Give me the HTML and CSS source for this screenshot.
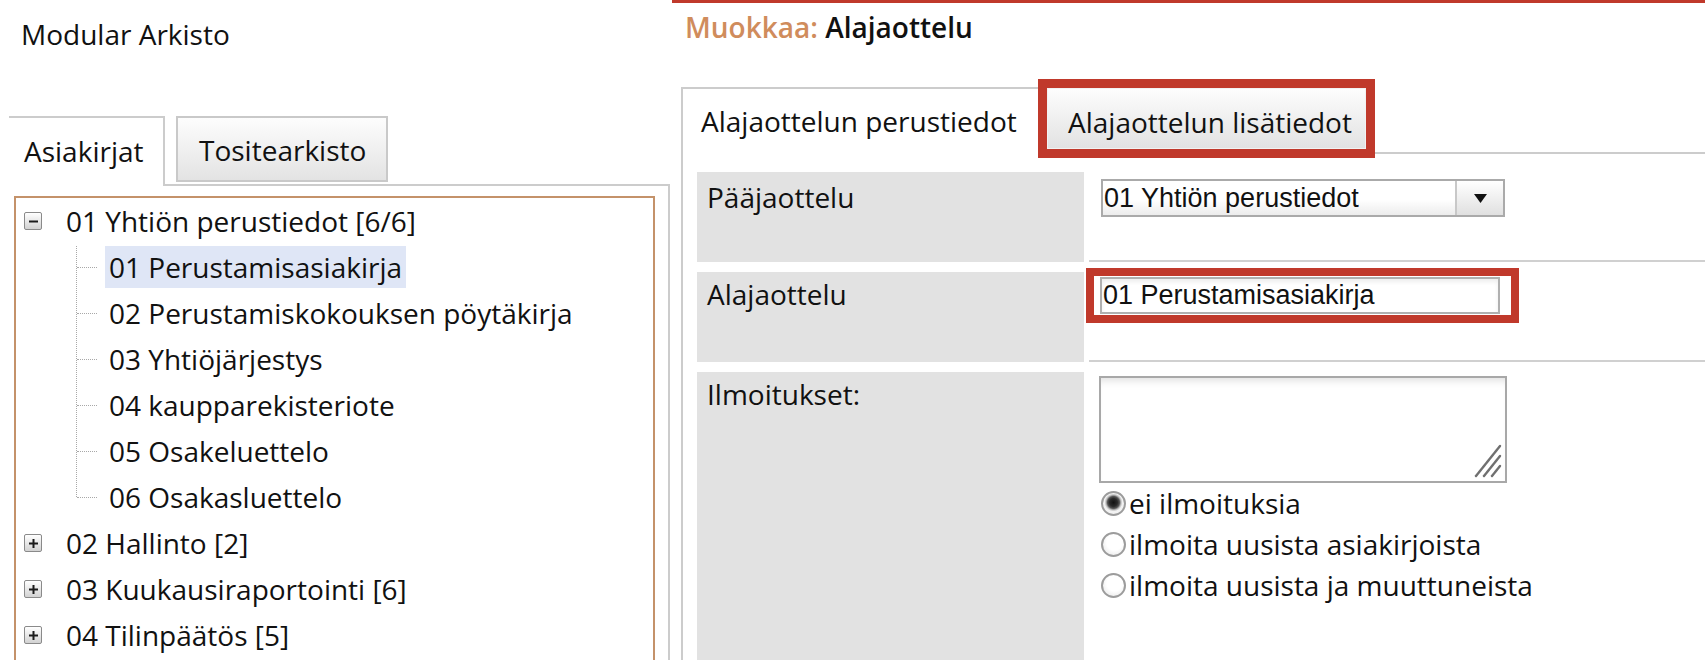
FILE: index.html
```html
<!DOCTYPE html>
<html lang="fi">
<head>
<meta charset="utf-8">
<title>Modular Arkisto</title>
<link rel="stylesheet" href="styles.css">
</head>
<body>
<div class="page">
  <div class="left">
    <div class="brand">Modular Arkisto</div>
    <div class="mark"></div>
    <div class="ltabs">
      <div class="ltab active">Asiakirjat</div>
      <div class="ltab inactive">Tositearkisto</div>
    </div>
    <div class="lbody">
      <div class="tree">
        <div class="node"><span class="tg"><svg width="9" height="9" viewBox="0 0 9 9"><rect x="0" y="3.5" width="9" height="2" fill="#1a1a1a"/></svg></span><span>01 Yhtiön perustiedot [6/6]</span></div>
        <div class="children">
          <div class="leaf"><span class="lbl sel">01 Perustamisasiakirja</span></div>
          <div class="leaf"><span class="lbl">02 Perustamiskokouksen pöytäkirja</span></div>
          <div class="leaf"><span class="lbl">03 Yhtiöjärjestys</span></div>
          <div class="leaf"><span class="lbl">04 kaupparekisteriote</span></div>
          <div class="leaf"><span class="lbl">05 Osakeluettelo</span></div>
          <div class="leaf"><span class="lbl">06 Osakasluettelo</span></div>
        </div>
        <div class="node"><span class="tg"><svg width="9" height="9" viewBox="0 0 9 9"><rect x="0" y="3.5" width="9" height="2" fill="#1a1a1a"/><rect x="3.5" y="0" width="2" height="9" fill="#1a1a1a"/></svg></span><span>02 Hallinto [2]</span></div>
        <div class="node"><span class="tg"><svg width="9" height="9" viewBox="0 0 9 9"><rect x="0" y="3.5" width="9" height="2" fill="#1a1a1a"/><rect x="3.5" y="0" width="2" height="9" fill="#1a1a1a"/></svg></span><span>03 Kuukausiraportointi [6]</span></div>
        <div class="node"><span class="tg"><svg width="9" height="9" viewBox="0 0 9 9"><rect x="0" y="3.5" width="9" height="2" fill="#1a1a1a"/><rect x="3.5" y="0" width="2" height="9" fill="#1a1a1a"/></svg></span><span>04 Tilinpäätös [5]</span></div>
      </div>
    </div>
  </div>

  <div class="right">
    <div class="title"><span class="verb">Muokkaa:</span> Alajaottelu</div>
    <div class="rtabs">
      <div class="rtab active">Alajaottelun perustiedot</div>
      <div class="redbox"><div class="rtab inactive">Alajaottelun lisätiedot</div></div>
      <div class="rline"></div>
    </div>
    <div class="rbody">
      <div class="frow">
        <div class="flabel">Pääjaottelu</div>
        <div class="fval">
          <div class="select">
            <span class="sval">01 Yhtiön perustiedot</span>
            <span class="sbtn"><svg width="13" height="9" viewBox="0 0 13 9"><polygon points="0,0 13,0 6.5,9" fill="#111"/></svg></span>
          </div>
        </div>
      </div>
      <div class="frow">
        <div class="flabel high">Alajaottelu</div>
        <div class="fval tight">
          <div class="redwrap"><div class="inp">01 Perustamisasiakirja</div></div>
        </div>
      </div>
      <div class="frow tall">
        <div class="flabel high">Ilmoitukset:</div>
        <div class="fval plain">
          <div class="ta">
            <svg width="36" height="36" viewBox="0 0 36 36"><g stroke="#707070" stroke-width="2.4" stroke-linecap="round"><line x1="33" y1="3" x2="9" y2="33"/><line x1="33" y1="13" x2="17" y2="33"/><line x1="33" y1="23" x2="25" y2="33"/></g></svg>
          </div>
          <div class="radio"><span class="rb on"></span><span>ei ilmoituksia</span></div>
          <div class="radio"><span class="rb"></span><span>ilmoita uusista asiakirjoista</span></div>
          <div class="radio"><span class="rb"></span><span>ilmoita uusista ja muuttuneista</span></div>
        </div>
      </div>
    </div>
  </div>
</div>
</body>
</html>
```

FILE: styles.css
```css
html, body {
  margin: 0;
  padding: 0;
  background: #fff;
}
body {
  width: 1705px;
  height: 660px;
  overflow: hidden;
  font-family: "Open Sans", "Noto Sans", sans-serif;
  font-size: 28px;
  color: #111;
}
.page {
  display: flex;
  height: 660px;
  overflow: hidden;
}

/* ---------- left panel ---------- */
.left {
  width: 670px;
  flex: none;
  display: flex;
  flex-direction: column;
}
.brand {
  padding: 14px 0 0 21px;
  line-height: 40px;
}
.mark {
  margin: 28px 0 0 22px;
  width: 3px;
  height: 1px;
  background: #bbb;
}
.ltabs {
  margin: 34px 0 0 9px;
  height: 68px;
  display: flex;
  align-items: flex-end;
  border-bottom: 2px solid #cccccc;
}
.ltab {
  box-sizing: border-box;
}
.ltab.active {
  width: 156px;
  height: 70px;
  margin-bottom: -2px;
  background: #fff;
  border-top: 2px solid #cccccc;
  border-right: 2px solid #cccccc;
  padding-left: 15px;
  line-height: 66px;
}
.ltab.inactive {
  width: 212px;
  height: 66px;
  margin: 0 0 2px 11px;
  border: 2px solid #c9c9c9;
  background: linear-gradient(#fdfdfd, #e3e3e3);
  padding: 3px 0 0 21px;
  line-height: 58px;
}
.lbody {
  flex: 1;
  border-right: 2px solid #cccccc;
}
.tree {
  margin: 10px 13px 0 14px;
  border: 2px solid #c4926a;
  border-bottom: none;
  height: 520px;
}
.node {
  height: 46px;
  display: flex;
  align-items: center;
  padding-left: 8px;
  line-height: 46px;
}
.tg {
  width: 18px;
  height: 18px;
  box-sizing: border-box;
  border: 1px solid #8a8a8a;
  border-radius: 2px;
  background: linear-gradient(#ffffff, #d2d2d2);
  margin-right: 24px;
  display: flex;
  align-items: center;
  justify-content: center;
  flex: none;
}
.tg svg {
  display: block;
}
.children {
  position: relative;
}
.children::before {
  content: "";
  position: absolute;
  left: 60px;
  top: 2px;
  bottom: 23px;
  border-left: 1px dotted #a8a8a8;
}
.leaf {
  position: relative;
  height: 46px;
  display: flex;
  align-items: center;
  padding-left: 89px;
}
.leaf::before {
  content: "";
  position: absolute;
  left: 61px;
  width: 20px;
  top: 50%;
  border-top: 1px dotted #a8a8a8;
}
.lbl {
  padding: 0 4px;
  line-height: 42px;
}
.lbl.sel {
  background: #dfe6f6;
}

/* ---------- right panel ---------- */
.right {
  flex: 1;
  margin-left: 2px;
  border-top: 3px solid #c0392b;
  display: flex;
  flex-direction: column;
}
.title {
  padding: 4px 0 0 13px;
  line-height: 40px;
  font-weight: 600;
  color: #111;
}
.title .verb {
  color: #d08c5c;
}
.rtabs {
  margin: 32px 0 0 9px;
  height: 79px;
  display: flex;
  align-items: flex-end;
}
.rtab {
  box-sizing: border-box;
}
.rtab.active {
  width: 357px;
  height: 71px;
  border-left: 2px solid #cccccc;
  border-top: 2px solid #cccccc;
  padding-left: 18px;
  line-height: 65px;
  flex: none;
}
.redbox {
  width: 337px;
  height: 79px;
  box-sizing: border-box;
  border: 9px solid #c0392b;
  flex: none;
}
.rtab.inactive {
  height: 100%;
  background: linear-gradient(#fdfdfd, #e2e2e2);
  padding: 5px 0 0 20px;
  line-height: 56px;
  border: 1px solid #f2f2f2;
}
.rline {
  flex: 1;
  margin-bottom: 4px;
  border-bottom: 2px solid #cccccc;
}
.rbody {
  flex: 1;
  margin-left: 9px;
  border-left: 2px solid #cccccc;
  padding: 14px 0 0 14px;
}
.frow {
  display: flex;
  height: 90px;
  margin-bottom: 10px;
}
.frow.tall {
  height: 320px;
}
.flabel {
  width: 387px;
  flex: none;
  box-sizing: border-box;
  background: #e2e2e2;
  padding: 5px 0 0 10px;
  line-height: 40px;
}
.flabel.high {
  padding-top: 2px;
}
.fval {
  flex: 1;
  margin-left: 5px;
  box-sizing: border-box;
  border-bottom: 2px solid #d0d0d0;
  padding: 7px 0 0 12px;
}
.fval.tight {
  padding: 0;
}
.fval.plain {
  border-bottom: none;
  padding: 4px 0 0 10px;
}
.select {
  display: flex;
  width: 404px;
  height: 38px;
  box-sizing: border-box;
  border: 2px solid #aaaaaa;
  background: linear-gradient(#ffffff 55%, #ececec);
  font-family: "Liberation Sans", Arial, sans-serif;
  font-size: 27px;
}
.sval {
  flex: 1;
  padding-left: 1px;
  line-height: 34px;
}
.sbtn {
  width: 46px;
  border-left: 2px solid #c8c8c8;
  background: linear-gradient(#ffffff, #e0e0e0);
  display: flex;
  align-items: center;
  justify-content: center;
}
.redwrap {
  width: max-content;
  margin: -4px 0 0 -3px;
  border: 8px solid #c0392b;
  padding: 1px 11px 1px 6px;
  background: #fff;
}
.inp {
  width: 400px;
  height: 37px;
  box-sizing: border-box;
  border: 2px solid #b0b0b0;
  box-shadow: inset 0 3px 4px rgba(0, 0, 0, 0.07);
  font-family: "Liberation Sans", Arial, sans-serif;
  font-size: 27px;
  line-height: 33px;
  padding-left: 1px;
}
.ta {
  width: 408px;
  height: 107px;
  box-sizing: border-box;
  border: 2px solid #a8a8a8;
  box-shadow: inset 0 8px 8px -6px rgba(0, 0, 0, 0.14);
  display: flex;
  align-items: flex-end;
  justify-content: flex-end;
  padding: 0 2px 2px 0;
}
.ta svg {
  display: block;
}
.radio {
  display: flex;
  align-items: center;
  height: 41px;
  line-height: 41px;
  padding-left: 2px;
}
.rb {
  width: 25px;
  height: 25px;
  box-sizing: border-box;
  border-radius: 50%;
  border: 2px solid #9c9c9c;
  background: radial-gradient(circle at 55% 40%, #ffffff 45%, #e2e2e2);
  margin-right: 3px;
  flex: none;
}
.rb.on {
  background: radial-gradient(circle at 50% 45%, #111 0, #2a2a2a 4px, #555 6px, #bbb 7.5px, #f2f2f2 9px);
}
```
